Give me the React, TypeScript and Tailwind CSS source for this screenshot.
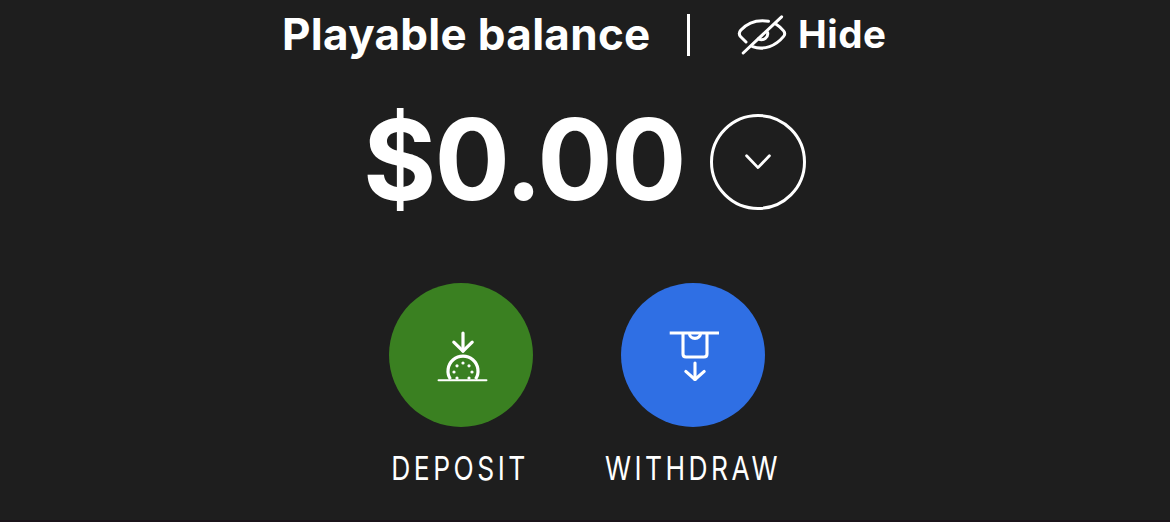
import React from 'react';

function HiddenEyeIcon() {
  return (
    <svg width="52" height="44" viewBox="0 0 52 44" fill="none" stroke="currentColor" strokeWidth="3" strokeLinecap="round" strokeLinejoin="round">
      <path d="M32.5 8.2C20.5 6.4 11.5 9.8 4.7 17.2C3 19.2 3 21.8 4.7 23.8L10 29" />
      <path d="M40.5 11.6C43.4 13.4 45.6 15.5 47.6 17.9C49 19.7 49 21.7 47.6 23.4C40 32.8 28 37.8 16.5 33.6" />
      <path d="M31.6 19.6C32.6 24.4 27.4 28.4 22.4 25.8" />
      <path d="M45.6 3.8L7.2 40" />
    </svg>
  );
}

function DepositIcon() {
  return (
    <svg width="52" height="52" viewBox="0 0 52 52" fill="none" stroke="currentColor" strokeWidth="3.2" strokeLinecap="round" strokeLinejoin="round">
      <path d="M26 3V21" />
      <path d="M16.8 12.2L26 21.2L35.2 12.2" />
      <path d="M13.4 49.2A15 15 0 1 1 38.6 49.2" strokeLinecap="butt" />
      <path d="M1.5 50.2H49.5" strokeWidth="1.9" />
      <g fill="currentColor" stroke="none">
        <circle cx="26" cy="33" r="1.6" />
        <circle cx="20" cy="35.8" r="1.6" />
        <circle cx="32" cy="35.8" r="1.6" />
        <circle cx="17" cy="42" r="1.6" />
        <circle cx="35" cy="42" r="1.6" />
        <circle cx="20" cy="48" r="1.6" />
        <circle cx="32" cy="48" r="1.6" />
      </g>
    </svg>
  );
}

function WithdrawIcon() {
  return (
    <svg width="52" height="52" viewBox="0 0 52 52" fill="none" stroke="currentColor" strokeWidth="3.1" strokeLinejoin="round">
      <path d="M0.7 3H50" />
      <path d="M14 3V24C14 25.8 15.2 27 17 27H35C36.8 27 38 25.8 38 24V3" />
      <path d="M20.4 3A5.6 5.4 0 0 0 31.6 3" />
      <path d="M26 33V49.5" strokeLinecap="round" />
      <path d="M16.8 41.4L26 49.5L35.2 41.4" strokeLinecap="round" />
    </svg>
  );
}

interface ActionProps {
  label: string;
  color: string;
  icon: React.ReactNode;
  labelClass: string;
}

function Action({ label, color, icon, labelClass }: ActionProps) {
  return (
    <button type="button" className="flex w-[232px] flex-col items-center">
      <span className={`flex size-36 items-center justify-center rounded-full pt-0.5 pl-1 ${color}`}>{icon}</span>
      <span className={`mt-[25px] inline-block scale-x-80 text-[33px] leading-none whitespace-nowrap ${labelClass}`}>{label}</span>
    </button>
  );
}

export default function App() {
  return (
    <div className="flex h-[522px] w-[1170px] flex-col overflow-hidden border-b-2 border-[#1b141a] bg-[#1e1e1e] pt-3 font-['Inter',sans-serif] text-white">
      <div className="flex h-11 items-start pl-[282px]">
        <h1 className="w-[405px] text-[44px] leading-none font-bold tracking-[0.3px] whitespace-nowrap">Playable balance</h1>
        <div className="mt-0.5 h-[42px] w-[3px] shrink-0 bg-white" />
        <button type="button" className="ml-[46px] flex items-start gap-2.5">
          <span className="mt-px">
            <HiddenEyeIcon />
          </span>
          <span className="mt-[3px] text-[38.5px] leading-none font-bold tracking-[0.5px]">Hide</span>
        </button>
      </div>

      <div className="mt-[47px] flex h-28 items-start pl-[363px]">
        <span className="w-[347px] text-[112px] leading-none font-bold tracking-[-1.8px]">$0.00</span>
        <button type="button" className="mt-[11px] flex size-24 items-center justify-center rounded-full border-3 border-white">
          <svg width="30" height="18" viewBox="0 0 30 18" fill="none" stroke="currentColor" strokeWidth="2.8" strokeLinecap="round" strokeLinejoin="round">
            <path d="M3.6 2.8L15 14.6L26.4 2.8" />
          </svg>
        </button>
      </div>

      <div className="mt-[68px] flex pl-[345px]">
        <Action label="DEPOSIT" color="bg-[#3a8021]" icon={<DepositIcon />} labelClass="tracking-[4.4px] -ml-0.5" />
        <Action label="WITHDRAW" color="bg-[#2f6fe4]" icon={<WithdrawIcon />} labelClass="tracking-[4.3px]" />
      </div>
    </div>
  );
}
